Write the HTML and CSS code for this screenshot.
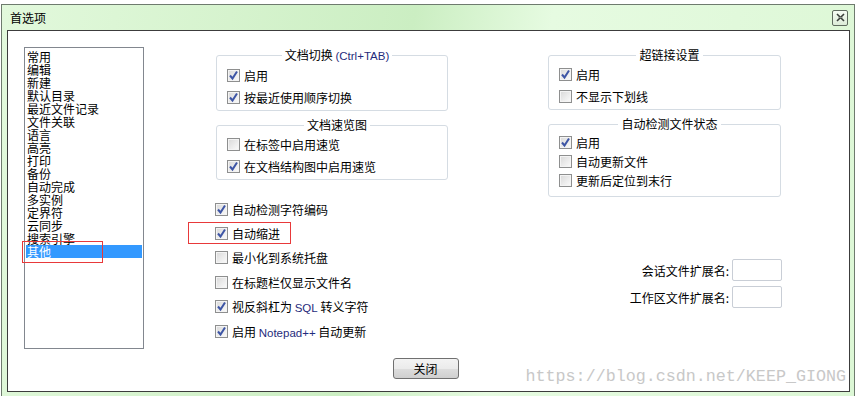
FILE: index.html
```html
<!DOCTYPE html>
<html lang="zh-CN">
<head>
    <meta charset="UTF-8">
    <title>首选项</title>
    <link rel="stylesheet" href="styles.css">
</head>
<body>
    <div class="window">
        <div class="titlebar">
            <span class="title">首选项</span>
            <span class="close-x">
                <svg width="9" height="9" viewBox="0 0 9 9">
                    <path d="M1 1 L8 8 M8 1 L1 8" stroke="#3a3f3a" stroke-width="1.6"/>
                    <path d="M2.5 4.5 H6.5" stroke="#8a918a" stroke-width="1"/>
                </svg>
            </span>
        </div>

        <div class="client">
            <div class="main">
                <ul class="nav">
                    <li>常用</li>
                    <li>编辑</li>
                    <li>新建</li>
                    <li>默认目录</li>
                    <li>最近文件记录</li>
                    <li>文件关联</li>
                    <li>语言</li>
                    <li>高亮</li>
                    <li>打印</li>
                    <li>备份</li>
                    <li>自动完成</li>
                    <li>多实例</li>
                    <li>定界符</li>
                    <li>云同步</li>
                    <li>搜索引擎</li>
                    <li class="selected">其他<span class="mark mark-nav"></span></li>
                </ul>

                <div class="col col-left">
                    <fieldset class="group">
                        <legend>文档切换 <span class="lat">(Ctrl+TAB)</span></legend>
                        <label class="row"><span class="cb on"><svg width="11" height="11" viewBox="0 0 11 11"><path d="M2 5.5 L4.5 8.5 L9 1.5" fill="none" stroke="#3d55a5" stroke-width="2"/></svg></span><span>启用</span></label>
                        <label class="row"><span class="cb on"><svg width="11" height="11" viewBox="0 0 11 11"><path d="M2 5.5 L4.5 8.5 L9 1.5" fill="none" stroke="#3d55a5" stroke-width="2"/></svg></span><span>按最近使用顺序切换</span></label>
                    </fieldset>

                    <fieldset class="group">
                        <legend>文档速览图</legend>
                        <label class="row"><span class="cb"></span><span>在标签中启用速览</span></label>
                        <label class="row"><span class="cb on"><svg width="11" height="11" viewBox="0 0 11 11"><path d="M2 5.5 L4.5 8.5 L9 1.5" fill="none" stroke="#3d55a5" stroke-width="2"/></svg></span><span>在文档结构图中启用速览</span></label>
                    </fieldset>

                    <div class="opts">
                        <label class="row"><span class="cb on"><svg width="11" height="11" viewBox="0 0 11 11"><path d="M2 5.5 L4.5 8.5 L9 1.5" fill="none" stroke="#3d55a5" stroke-width="2"/></svg></span><span>自动检测字符编码</span></label>
                        <label class="row"><span class="mark mark-opt"></span><span class="cb on"><svg width="11" height="11" viewBox="0 0 11 11"><path d="M2 5.5 L4.5 8.5 L9 1.5" fill="none" stroke="#3d55a5" stroke-width="2"/></svg></span><span>自动缩进</span></label>
                        <label class="row"><span class="cb"></span><span>最小化到系统托盘</span></label>
                        <label class="row"><span class="cb"></span><span>在标题栏仅显示文件名</span></label>
                        <label class="row"><span class="cb on"><svg width="11" height="11" viewBox="0 0 11 11"><path d="M2 5.5 L4.5 8.5 L9 1.5" fill="none" stroke="#3d55a5" stroke-width="2"/></svg></span><span>视反斜杠为 <span class="lat">SQL</span> 转义字符</span></label>
                        <label class="row"><span class="cb on"><svg width="11" height="11" viewBox="0 0 11 11"><path d="M2 5.5 L4.5 8.5 L9 1.5" fill="none" stroke="#3d55a5" stroke-width="2"/></svg></span><span>启用 <span class="lat">Notepad++</span> 自动更新</span></label>
                    </div>
                </div>

                <div class="col col-right">
                    <fieldset class="group">
                        <legend>超链接设置</legend>
                        <label class="row"><span class="cb on"><svg width="11" height="11" viewBox="0 0 11 11"><path d="M2 5.5 L4.5 8.5 L9 1.5" fill="none" stroke="#3d55a5" stroke-width="2"/></svg></span><span>启用</span></label>
                        <label class="row"><span class="cb"></span><span>不显示下划线</span></label>
                    </fieldset>

                    <fieldset class="group group-tight">
                        <legend>自动检测文件状态</legend>
                        <label class="row"><span class="cb on"><svg width="11" height="11" viewBox="0 0 11 11"><path d="M2 5.5 L4.5 8.5 L9 1.5" fill="none" stroke="#3d55a5" stroke-width="2"/></svg></span><span>启用</span></label>
                        <label class="row"><span class="cb"></span><span>自动更新文件</span></label>
                        <label class="row"><span class="cb"></span><span>更新后定位到末行</span></label>
                    </fieldset>

                    <div class="fields">
                        <div class="field"><span>会话文件扩展名:</span><input type="text"></div>
                        <div class="field"><span>工作区文件扩展名:</span><input type="text"></div>
                    </div>
                </div>
            </div>

            <div class="footer">
                <button class="btn">关闭</button>
            </div>

            <div class="watermark">https://blog.csdn.net/KEEP_GIONG</div>
        </div>
    </div>
</body>
</html>
```

FILE: styles.css
```css
body{
    margin: 0;
    background-color: #ffffff;
    font-family: "Noto Sans CJK SC", "Liberation Sans", sans-serif;
    font-size: 12px;
    color: #000000;
    overflow: hidden;
}

.window{
    box-sizing: border-box;
    width: 854px;
    height: 394px;
    margin: 4px 0 0 1px;
    padding: 0 4px 0 5px;
    border: 1px solid #6e7b6e;
    border-bottom: none;
    background: linear-gradient(100deg, #e2f9dc 0%, #d6f3ce 25%, #cbeec2 45%, #e6fbe1 60%, #dcf7d5 100%);
}

.titlebar{
    display: flex;
    align-items: center;
    justify-content: space-between;
    height: 25px;
    padding-left: 3px;
}

.title{
    line-height: 14px;
}

.close-x{
    display: flex;
    align-items: center;
    justify-content: center;
    box-sizing: border-box;
    width: 16px;
    height: 16px;
    margin-right: 2px;
    border: 1px solid #5f6b5f;
    border-radius: 2px;
    background: linear-gradient(#f6fdf4, #dcecd8);
}

.client{
    position: relative;
    box-sizing: border-box;
    height: 362px;
    border: 1px solid #3c3c3c;
    background-color: #ffffff;
}

.main{
    display: flex;
    align-items: flex-start;
    padding: 16px 0 0 16px;
}

.nav{
    box-sizing: border-box;
    width: 120px;
    height: 302px;
    margin: 0;
    padding: 2px 0 0 0;
    list-style-type: none;
    border: 1px solid #82878f;
}

.nav li{
    position: relative;
    margin: 0 1px;
    padding-left: 1px;
    line-height: 13px;
    height: 13px;
    white-space: nowrap;
}

.nav li.selected{
    background-color: #3399ff;
    color: #ffffff;
}

.mark{
    position: absolute;
    box-sizing: border-box;
    border: 1px solid #e8393a;
}

.mark-nav{
    left: -4px;
    top: -4px;
    width: 81px;
    height: 22px;
}

.mark-opt{
    left: -27px;
    top: 1px;
    width: 103px;
    height: 22px;
}

.col{
    display: flex;
    flex-direction: column;
    margin-top: 1px;
}

.col-left{
    width: 232px;
    margin-left: 72px;
}

.col-right{
    width: 234px;
    margin-left: 100px;
}

.group{
    box-sizing: border-box;
    width: 232px;
    margin: 0 0 7px 0;
    padding: 1px 0 2px 10px;
    border: 1px solid #d5dce3;
    border-radius: 3px;
}

.col-right .group{
    width: 233px;
}

.group legend{
    margin: 0 auto;
    padding: 0 3px;
    line-height: 14px;
}

.row{
    position: relative;
    display: flex;
    align-items: center;
    gap: 4px;
    height: 22px;
    white-space: nowrap;
}

.group-tight{
    padding-top: 2px;
    padding-bottom: 6px;
}

.group-tight .row{
    height: 19px;
}

.cb{
    display: flex;
    align-items: center;
    justify-content: center;
    box-sizing: border-box;
    width: 13px;
    height: 13px;
    flex-shrink: 0;
    border: 1px solid #8e8f8f;
    background: linear-gradient(135deg, #d8d8d8 0%, #ececec 55%, #fbfbfb 100%);
    box-shadow: inset 0 0 0 1px #f4f4f4;
}

.lat{
    font-family: "Liberation Sans", Arial, sans-serif;
    font-size: 11.5px;
    color: #1f2c7c;
}

.opts{
    margin: 10px 0 0 -1px;
}

.opts .row{
    height: 24.4px;
}

.fields{
    display: flex;
    flex-direction: column;
    gap: 5px;
    margin-top: 55px;
}

.field{
    display: flex;
    align-items: center;
    justify-content: flex-end;
    gap: 3px;
}

.field input{
    box-sizing: border-box;
    width: 50px;
    height: 22px;
    margin: 0;
    border: 1px solid #c9ced6;
    border-radius: 2px;
    background-color: #ffffff;
}

.footer{
    display: flex;
    justify-content: center;
    padding: 9px 6px 0 0;
}

.btn{
    box-sizing: border-box;
    width: 66px;
    height: 21px;
    padding: 0;
    border: 1px solid #707070;
    border-radius: 3px;
    background: linear-gradient(#f3f3f3 0%, #ebebeb 50%, #dddddd 51%, #cfcfcf 100%);
    font-family: "Noto Sans CJK SC", sans-serif;
    font-size: 12px;
    color: #000000;
}

.watermark{
    position: absolute;
    right: 3px;
    bottom: 6px;
    font-family: "Liberation Mono", monospace;
    font-size: 16.7px;
    line-height: 17px;
    color: #c8c8c8;
}
```
